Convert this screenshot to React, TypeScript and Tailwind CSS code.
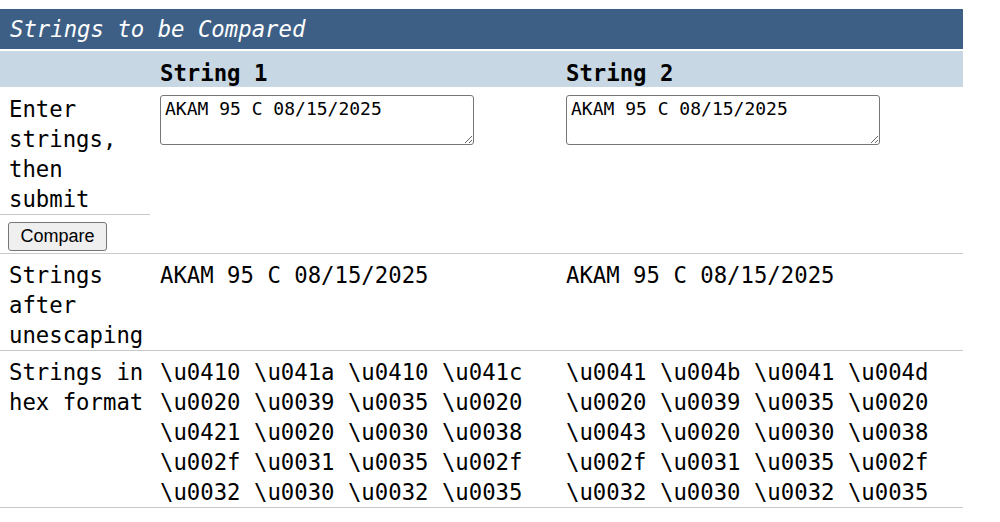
import { useState } from "react";

// Unicode escape comparison panel: two inputs, their unescaped text, and a
// per-character \uXXXX dump so look-alike glyphs (Cyrillic vs Latin) stand out.
const mono = "font-['DejaVu_Sans_Mono','Liberation_Mono',monospace]";

const toHex = (s: string) =>
  Array.from(s)
    .map((c) => "\\u" + c.charCodeAt(0).toString(16).padStart(4, "0"))
    .join(" ");

export default function App() {
  const [a, setA] = useState("АКАМ 95 С 08/15/2025");
  const [b, setB] = useState("AKAM 95 C 08/15/2025");
  const [shown, setShown] = useState<[string, string]>([a, b]);

  const row = "grid grid-cols-[152px_406px_405px] border-b border-[#c9c9c9]";

  return (
    <div className={`min-h-[522px] bg-white pt-[9px] text-[22.3px] text-black ${mono}`}>
      <div className="w-[963px]">
        <div className="h-[40px] bg-[#3d5f85] pl-[10px] leading-[40px] text-white italic">
          Strings to be Compared
        </div>
        <div className="mt-[2px] grid h-[36px] grid-cols-[152px_406px_405px] bg-[#c7d7e3] pt-[8px] font-bold leading-[28px]">
          <div />
          <div className="pl-[8px]">String 1</div>
          <div className="pl-[8px]">String 2</div>
        </div>

        <div className={`${row} leading-[30px]`}>
          <div>
            <div className="w-[150px] border-b border-[#c9c9c9] pt-[7px] pr-[6px] pl-[9px]">
              Enter strings, then submit
            </div>
            <button
              onClick={() => setShown([a, b])}
              className="mt-[7px] mb-[2px] ml-[8px] h-[29px] w-[99px] rounded-[3px] border border-[#767676] bg-[#efefef] font-['Liberation_Sans',Arial,sans-serif] text-[18px] leading-[27px] not-italic"
            >
              Compare
            </button>
          </div>
          {[a, b].map((v, i) => (
            <div key={i} className="pt-[8px] pl-[8px]">
              <textarea
                value={v}
                onChange={(e) => (i === 0 ? setA(e.target.value) : setB(e.target.value))}
                className={`block h-[50px] w-[314px] rounded-[3px] border border-[#767676] px-[4px] py-[2px] text-[18px] leading-[21px] ${mono}`}
              />
            </div>
          ))}
        </div>

        <div className={`${row} leading-[30px]`}>
          <div className="pt-[6px] pr-[6px] pl-[9px]">Strings after unescaping</div>
          {shown.map((v, i) => (
            <div key={i} className="pt-[6px] pl-[8px]">
              {v}
            </div>
          ))}
        </div>

        <div className={`${row} leading-[30px]`}>
          <div className="pt-[6px] pr-[6px] pl-[9px]">Strings in hex format</div>
          {shown.map((v, i) => (
            <div key={i} className="pt-[6px] pr-[8px] pl-[8px]">
              {toHex(v)}
            </div>
          ))}
        </div>
      </div>
    </div>
  );
}
